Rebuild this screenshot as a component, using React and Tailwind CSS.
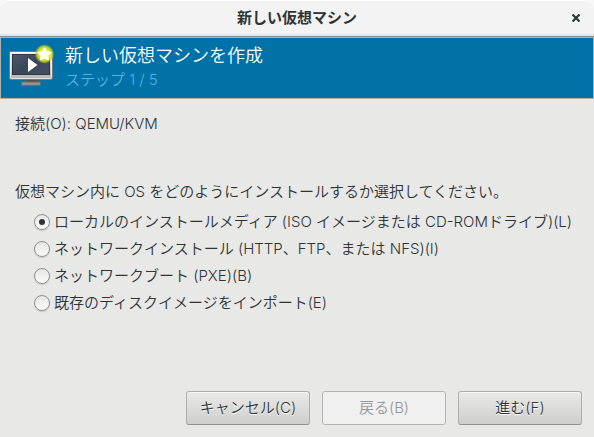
import React, { useState } from "react";

const METHODS = [
  { id: "local", label: "ローカルのインストールメディア (ISO イメージまたは CD-ROMドライブ)(L)" },
  { id: "network", label: "ネットワークインストール (HTTP、FTP、または NFS)(I)" },
  { id: "pxe", label: "ネットワークブート (PXE)(B)" },
  { id: "import", label: "既存のディスクイメージをインポート(E)" },
];

function MachineIcon() {
  return (
    <svg className="w-12 h-12 shrink-0" viewBox="0 0 48 48" aria-hidden="true">
      <defs>
        <linearGradient id="bezel" x1="0" y1="0" x2="0" y2="1">
          <stop offset="0" stopColor="#f4f4f3" />
          <stop offset="0.5" stopColor="#d6d6d5" />
          <stop offset="1" stopColor="#b3b3b3" />
        </linearGradient>
        <linearGradient id="screen" x1="0" y1="0" x2="1" y2="1">
          <stop offset="0" stopColor="#4e586b" />
          <stop offset="0.5" stopColor="#3c4558" />
          <stop offset="1" stopColor="#465064" />
        </linearGradient>
        <radialGradient id="glow">
          <stop offset="0.5" stopColor="#e9ee2c" />
          <stop offset="0.75" stopColor="#d3de1f" stopOpacity="0.85" />
          <stop offset="1" stopColor="#8fc02c" stopOpacity="0" />
        </radialGradient>
      </defs>
      <rect x="17" y="35" width="12" height="4" fill="#4f5154" />
      <rect x="12.500" y="38" width="19" height="3.500" rx="1" fill="#8f9193" stroke="#6c6e70" />
      <rect x="0.500" y="7.500" width="43" height="28" rx="1.500" fill="url(#bezel)" stroke="#77797b" />
      <rect x="1.500" y="8.500" width="41" height="26" rx="1" fill="none" stroke="#fff" strokeOpacity="0.6" />
      <rect x="3.500" y="10.500" width="37" height="20" fill="url(#screen)" stroke="#2d3442" />
      <path d="M19 14v14l9.500-7z" fill="#fff" />
      <circle cx="35.500" cy="10" r="10" fill="url(#glow)" />
      <path
        d="M35.500 4.200l1.900 3.700 4.100.6-3 2.900.7 4.100-3.700-2-3.700 2 .7-4.100-3-2.900 4.100-.6z"
        fill="#fff"
        stroke="#fff"
        strokeWidth="1.500"
        strokeLinejoin="round"
      />
    </svg>
  );
}

function TitleBar() {
  return (
    <header className="grid grid-cols-[1fr_auto_1fr] items-center h-[37px] px-3 bg-[#f3f3f3] border-b border-[#8e8f8a] rounded-t-lg shadow-[inset_0_1px_0_#ffffff,inset_0_-2px_0_#e4e4e2]">
      <span />
      <h1 className="text-[15px] leading-5 font-bold">新しい仮想マシン</h1>
      <button type="button" aria-label="閉じる" className="justify-self-end p-0.5">
        <svg className="w-2 h-2" viewBox="0 0 8 8" stroke="#2e3436" strokeWidth="2.200">
          <path d="M0.500 0.500l7 7M7.500 0.500l-7 7" />
        </svg>
      </button>
    </header>
  );
}

function ActionButton({ children, disabled }) {
  const look = disabled
    ? "bg-[#f0f0f0] border-[#b4b5b2] text-[#94979a]"
    : "bg-linear-to-b from-[#e9e9e8] to-[#cfcfcd] border-[#acada9] border-b-[#8e908c] shadow-[inset_0_1px_0_#f8f8f8] [text-shadow:0_1px_#fff]";
  return (
    <button
      type="button"
      disabled={disabled}
      className={`w-31 h-[34px] border rounded-[3px] text-[15px] leading-5 ${look}`}
    >
      {children}
    </button>
  );
}

export default function App() {
  const [method, setMethod] = useState("local");

  return (
    <div className="bg-[#f8f8f8]">
      <div className="flex flex-col min-h-screen bg-[#e8e8e7] text-[#2e3436] rounded-t-lg font-['Inter','Noto_Sans_CJK_JP',sans-serif] font-[350]">
        <TitleBar />

        <section className="flex items-center gap-2 h-[62px] px-2 bg-[#0072a8] border border-[#b0b0ad]">
          <MachineIcon />
          <div>
            <h2 className="text-lg leading-6 text-white">新しい仮想マシンを作成</h2>
            <p className="text-[15px] leading-6 text-[#59b0e2]">ステップ 1 / 5</p>
          </div>
        </section>

        <main className="flex-1 px-[15px] pt-[15px] text-[15px] leading-5">
          <p>接続(O): QEMU/KVM</p>

          <fieldset className="mt-12">
            <legend>仮想マシン内に OS をどのようにインストールするか選択してください。</legend>
            <div className="flex flex-col gap-[7px] pl-[19px] pt-[10px]">
              {METHODS.map((m) => (
                <label key={m.id} className="flex items-center gap-1 whitespace-nowrap">
                  <input
                    type="radio"
                    name="method"
                    value={m.id}
                    checked={method === m.id}
                    onChange={() => setMethod(m.id)}
                    className="grid place-items-center appearance-none shrink-0 w-4 h-4 rounded-full border border-[#8f918d] bg-linear-to-b from-[#e6e6e5] to-[#fbfbfb] shadow-[0_1px_1px_#c4c4c2] before:w-1.5 before:h-1.5 before:rounded-full checked:before:bg-[#2e3436]"
                  />
                  {m.label}
                </label>
              ))}
            </div>
          </fieldset>
        </main>

        <footer className="flex justify-end gap-3 p-3">
          <ActionButton>キャンセル(C)</ActionButton>
          <ActionButton disabled>戻る(B)</ActionButton>
          <ActionButton>進む(F)</ActionButton>
        </footer>
      </div>
    </div>
  );
}
